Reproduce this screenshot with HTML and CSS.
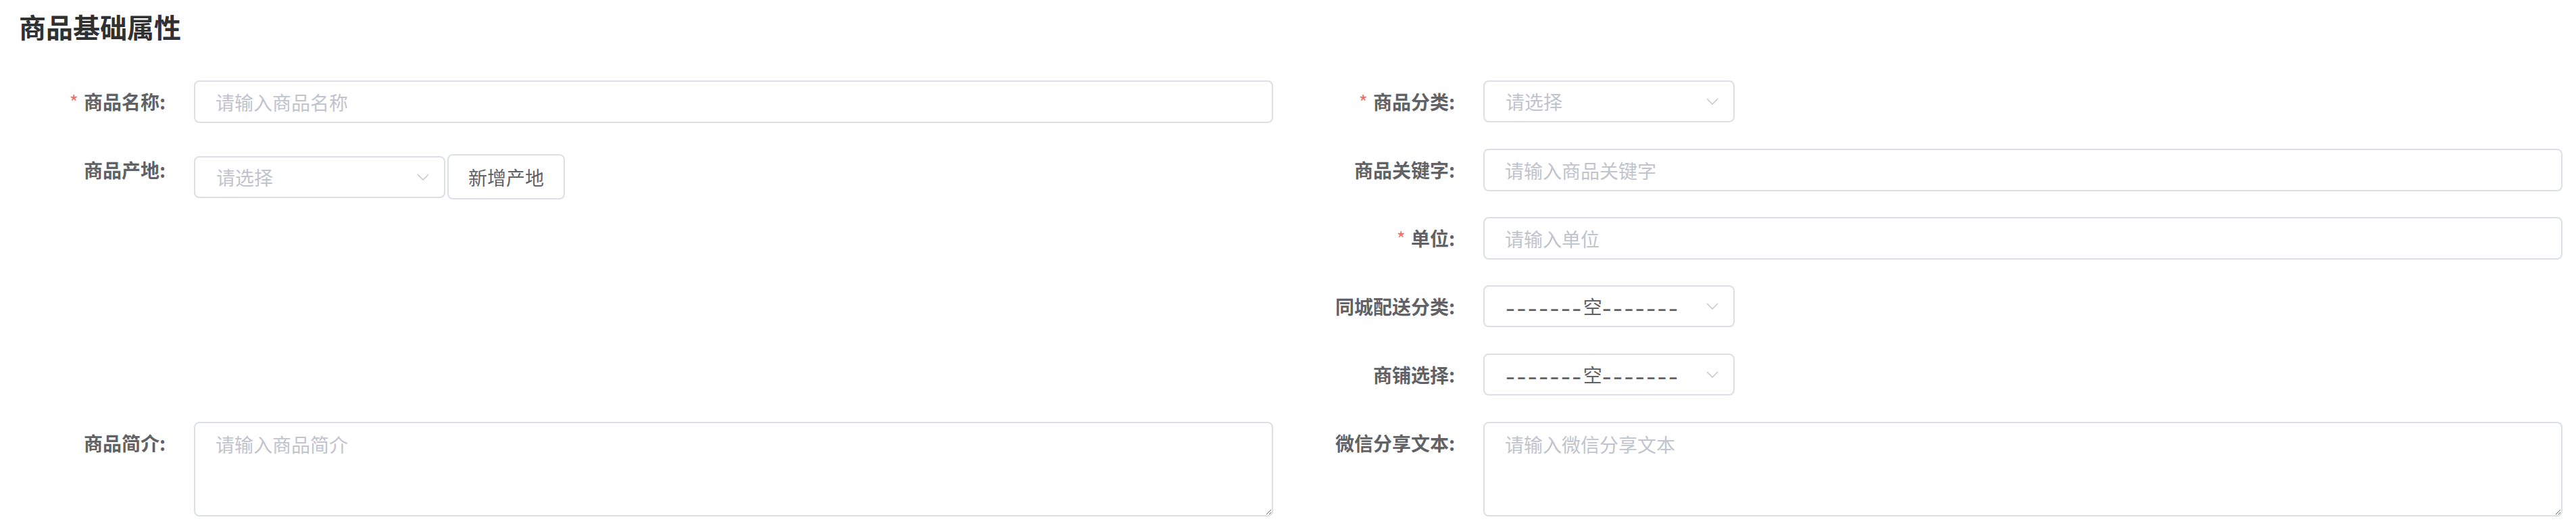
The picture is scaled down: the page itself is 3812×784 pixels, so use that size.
FILE: index.html
```html
<!DOCTYPE html>
<html lang="zh-CN">
<head>
<meta charset="utf-8">
<title>商品基础属性</title>
<link rel="stylesheet" href="styles.css">
</head>
<body>
<div class="page">
  <h2 class="title">商品基础属性</h2>
  <div class="form">
    <div class="item">
      <label class="label"><span class="req">*</span>商品名称:</label>
      <div class="content"><input class="input" placeholder="请输入商品名称"></div>
    </div>
    <div class="item">
      <label class="label"><span class="req">*</span>商品分类:</label>
      <div class="content">
        <div class="select"><span class="ph">请选择</span><svg class="arrow" width="18" height="10" viewBox="0 0 18 10"><polyline points="1,1 9,9 17,1" fill="none" stroke="#c0c4cc" stroke-width="1.4"/></svg></div>
      </div>
    </div>

    <div class="item">
      <label class="label">商品产地:</label>
      <div class="content origin">
        <div class="select"><span class="ph">请选择</span><svg class="arrow" width="18" height="10" viewBox="0 0 18 10"><polyline points="1,1 9,9 17,1" fill="none" stroke="#c0c4cc" stroke-width="1.4"/></svg></div>
        <button class="btn">新增产地</button>
      </div>
    </div>
    <div class="stack">
      <div class="item">
        <label class="label">商品关键字:</label>
        <div class="content"><input class="input" placeholder="请输入商品关键字"></div>
      </div>
      <div class="item">
        <label class="label"><span class="req">*</span>单位:</label>
        <div class="content"><input class="input" placeholder="请输入单位"></div>
      </div>
      <div class="item">
        <label class="label">同城配送分类:</label>
        <div class="content">
          <div class="select"><span class="val"><span class="dash">-------</span>空<span class="dash">-------</span></span><svg class="arrow" width="18" height="10" viewBox="0 0 18 10"><polyline points="1,1 9,9 17,1" fill="none" stroke="#c0c4cc" stroke-width="1.4"/></svg></div>
        </div>
      </div>
      <div class="item">
        <label class="label">商铺选择:</label>
        <div class="content">
          <div class="select"><span class="val"><span class="dash">-------</span>空<span class="dash">-------</span></span><svg class="arrow" width="18" height="10" viewBox="0 0 18 10"><polyline points="1,1 9,9 17,1" fill="none" stroke="#c0c4cc" stroke-width="1.4"/></svg></div>
        </div>
      </div>
    </div>

    <div class="item">
      <label class="label">商品简介:</label>
      <div class="content"><textarea class="textarea" placeholder="请输入商品简介"></textarea></div>
    </div>
    <div class="item">
      <label class="label">微信分享文本:</label>
      <div class="content"><textarea class="textarea" placeholder="请输入微信分享文本"></textarea></div>
    </div>
  </div>
</div>
</body>
</html>
```
FILE: styles.css
```css
* { box-sizing: border-box; }
html, body {
  margin: 0;
  background: #ffffff;
  font-family: "Noto Sans CJK SC", "Noto Sans", sans-serif;
}
.page {
  padding: 19px 20px 0 20px;
}
.title {
  margin: 0 0 60px 8px;
  font-size: 40px;
  line-height: 40px;
  font-weight: 700;
  color: #303133;
}
.form {
  display: grid;
  grid-template-columns: 1fr 1fr;
  column-gap: 44px;
  row-gap: 38px;
  align-items: start;
}
.stack {
  display: flex;
  flex-direction: column;
  gap: 38px;
}
.item {
  display: flex;
  align-items: flex-start;
}
.label {
  flex: 0 0 267px;
  text-align: right;
  padding-right: 42px;
  font-size: 28px;
  line-height: 63px;
  font-weight: 700;
  color: #606266;
  white-space: nowrap;
}
.req {
  color: #f56c6c;
  margin-right: 8px;
  font-weight: 400;
}
.content {
  flex: 1;
  display: flex;
  align-items: center;
}
.input {
  width: 100%;
  height: 63px;
  border: 2px solid #dcdfe6;
  border-radius: 8px;
  padding: 0 30px;
  font-family: inherit;
  font-size: 28px;
  color: #606266;
  background: #fff;
  outline: none;
}
.input::placeholder, .textarea::placeholder {
  color: #c0c4cc;
}
.select {
  width: 372px;
  height: 62px;
  border: 2px solid #dcdfe6;
  border-radius: 8px;
  padding: 0 22px 0 31px;
  display: flex;
  align-items: center;
  justify-content: space-between;
  font-size: 28px;
  background: #fff;
}
.ph { color: #c0c4cc; }
.val { color: #606266; white-space: nowrap; }
.dash {
  font-size: 40px;
  letter-spacing: 2.5px;
  vertical-align: -5px;
  line-height: 28px;
}
.arrow { display: block; }
.origin {
  padding-top: 8px;
  gap: 3px;
}
.btn {
  height: 67px;
  padding: 0 29px;
  border: 2px solid #dcdfe6;
  border-radius: 8px;
  background: #fff;
  font-family: inherit;
  font-size: 28px;
  color: #606266;
}
.textarea {
  width: 100%;
  height: 140px;
  border: 2px solid #dcdfe6;
  border-radius: 8px;
  padding: 10px 30px;
  font-family: inherit;
  font-size: 28px;
  line-height: 42px;
  color: #606266;
  background: #fff;
  outline: none;
  display: block;
  resize: both;
}
```
